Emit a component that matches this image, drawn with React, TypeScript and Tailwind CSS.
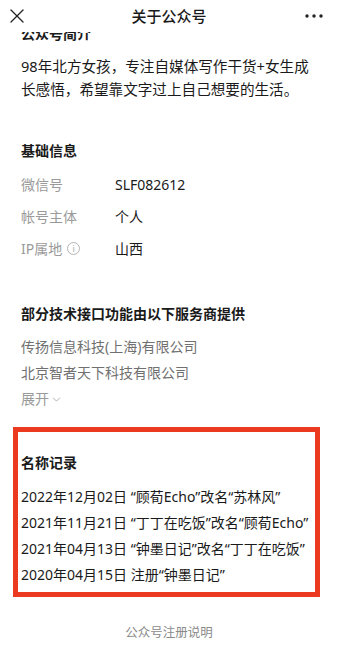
import { X, ChevronDown } from "lucide-react";

const basics = [
  { label: "微信号", value: "SLF082612" },
  { label: "帐号主体", value: "个人" },
  { label: "IP属地", value: "山西", info: true },
];

const names = [
  "2022年12月02日 “顾荀Echo”改名“苏林风”",
  "2021年11月21日 “丁丁在吃饭”改名“顾荀Echo”",
  "2021年04月13日 “钟墨日记”改名“丁丁在吃饭”",
  "2020年04月15日 注册“钟墨日记”",
];

export default function App() {
  return (
    <div
      className="relative w-[338px] h-[650px] overflow-hidden bg-white text-[#1a1a1a]"
      style={{ fontFamily: '"Noto Sans", "Noto Sans CJK SC", sans-serif' }}
    >
      {/* top bar sits over the scrolled content */}
      <div className="absolute top-0 left-0 right-0 z-10 h-[32px] bg-white flex items-center justify-between pl-[5px] pr-[15px]">
        <X className="w-[24px] h-[24px] text-[#222]" strokeWidth={1.3} />
        <span className="absolute left-1/2 -translate-x-1/2 text-[15px] font-medium leading-none">关于公众号</span>
        <svg width="18" height="4" viewBox="0 0 18 4" className="text-[#222]">
          <circle cx="2" cy="2" r="1.7" fill="currentColor" />
          <circle cx="9" cy="2" r="1.7" fill="currentColor" />
          <circle cx="16" cy="2" r="1.7" fill="currentColor" />
        </svg>
      </div>

      <div className="pt-[24px] px-[21px]">
        <h2 className="text-[14px] font-bold leading-[20px]">公众号简介</h2>
        <p className="mt-[11px] text-[14.6px] leading-[23px]">
          98年北方女孩，专注自媒体写作干货+女生成长感悟，希望靠文字过上自己想要的生活。
        </p>

        <h2 className="mt-[40px] text-[14px] font-bold leading-[20px]">基础信息</h2>
        <div className="mt-[7px]">
          {basics.map((r) => (
            <div key={r.label} className="flex items-center h-[32px] text-[14px]">
              <div className="w-[94px] flex items-center gap-[5px] text-[#9a9a9a]">
                {r.label}
                {r.info && (
                  <span className="w-[13px] h-[13px] rounded-full border border-[#b5b5b5] text-[9px] leading-none flex items-center justify-center text-[#aaa]">
                    i
                  </span>
                )}
              </div>
              <div>{r.value}</div>
            </div>
          ))}
        </div>

        <h2 className="mt-[40px] text-[14px] font-bold leading-[20px]">部分技术接口功能由以下服务商提供</h2>
        <div className="mt-[10px] text-[14px] leading-[26px] text-[#707070]">
          <div>传扬信息科技(上海)有限公司</div>
          <div>北京智者天下科技有限公司</div>
          <div className="flex items-center text-[#9a9a9a]">
            展开
            <ChevronDown className="w-[13px] h-[13px] ml-[1px]" strokeWidth={1.4} />
          </div>
        </div>

        <div className="mt-[15px] -ml-[8px] -mr-[3px] border-[5px] border-[#ec3a21] pl-[3px] pt-[21px] pb-[4px]">
          <h2 className="text-[14px] font-bold leading-[20px]">名称记录</h2>
          <div className="mt-[11px] text-[14px] leading-[26px] whitespace-nowrap">
            {names.map((n) => (
              <div key={n}>{n}</div>
            ))}
          </div>
        </div>

        <div className="mt-[26px] text-center text-[12.5px] leading-[20px] text-[#8a8a8a]">公众号注册说明</div>
      </div>
    </div>
  );
}
